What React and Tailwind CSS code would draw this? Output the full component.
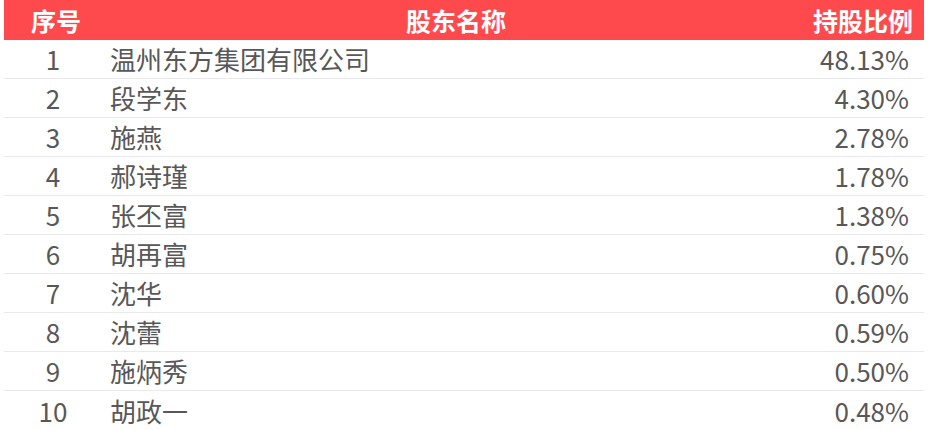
const rows = [
  ["1", "温州东方集团有限公司", "48.13%"],
  ["2", "段学东", "4.30%"],
  ["3", "施燕", "2.78%"],
  ["4", "郝诗瑾", "1.78%"],
  ["5", "张丕富", "1.38%"],
  ["6", "胡再富", "0.75%"],
  ["7", "沈华", "0.60%"],
  ["8", "沈蕾", "0.59%"],
  ["9", "施炳秀", "0.50%"],
  ["10", "胡政一", "0.48%"],
];

export default function App() {
  return (
    <div className="w-[928px] h-[430px] bg-white px-[4px] font-['Noto_Sans_CJK_SC',sans-serif]">
      <div className="flex items-center h-[40px] bg-[#fe4a4d] text-white font-bold text-[25px] leading-none">
        <div className="w-[106px] text-center pr-[2px]">序号</div>
        <div className="flex-1 text-center pr-[6px]">股东名称</div>
        <div className="w-[116px] text-right pr-[11px]">持股比例</div>
      </div>
      {rows.map((r, i) => (
        <div
          key={r[0]}
          className={`flex items-center h-[39px] text-[#585858] text-[26px] leading-none ${i < rows.length - 1 ? "border-b border-[#e8e8ee]" : ""}`}
        >
          <div className="w-[98px] text-center">{r[0]}</div>
          <div className="flex-1 pl-[8px]">{r[1]}</div>
          <div className="w-[116px] text-right pr-[15px]">{r[2]}</div>
        </div>
      ))}
    </div>
  );
}
